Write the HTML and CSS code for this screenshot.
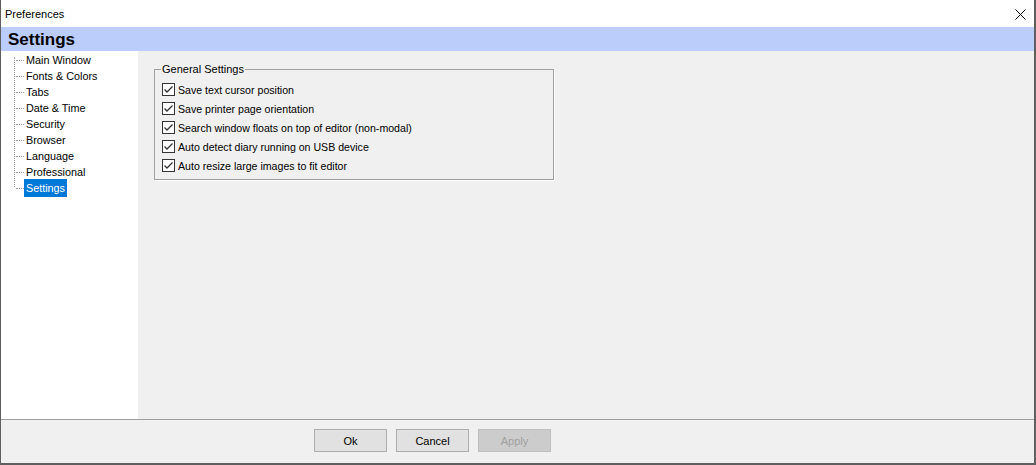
FILE: index.html
```html
<!DOCTYPE html>
<html lang="en">

<head>
    <meta charset="UTF-8">
    <title>Preferences</title>
    <link rel="stylesheet" href="styles.css">
</head>

<body>
    <div class="window">
        <div class="titlebar">
            <span class="title">Preferences</span>
            <span class="close">
                <svg width="11" height="11" viewBox="0 0 11 11">
                    <path d="M0.5 0.5 L10.5 10.5 M10.5 0.5 L0.5 10.5" stroke="#000" stroke-width="1" fill="none"/>
                </svg>
            </span>
        </div>

        <div class="banner">Settings</div>

        <div class="content">
            <nav class="sidebar">
                <ul class="tree">
                    <li><span class="node">Main Window</span></li>
                    <li><span class="node">Fonts &amp; Colors</span></li>
                    <li><span class="node">Tabs</span></li>
                    <li><span class="node">Date &amp; Time</span></li>
                    <li><span class="node">Security</span></li>
                    <li><span class="node">Browser</span></li>
                    <li><span class="node">Language</span></li>
                    <li><span class="node">Professional</span></li>
                    <li><span class="node selected">Settings</span></li>
                </ul>
            </nav>

            <main class="pane">
                <fieldset class="group">
                    <legend>General Settings</legend>
                    <div class="option"><span class="check"></span>Save text cursor position</div>
                    <div class="option"><span class="check"></span>Save printer page orientation</div>
                    <div class="option"><span class="check"></span>Search window floats on top of editor (non-modal)</div>
                    <div class="option"><span class="check"></span>Auto detect diary running on USB device</div>
                    <div class="option"><span class="check"></span>Auto resize large images to fit editor</div>
                </fieldset>
            </main>
        </div>

        <div class="footer">
            <button class="btn">Ok</button>
            <button class="btn">Cancel</button>
            <button class="btn" disabled>Apply</button>
        </div>
    </div>
</body>

</html>
```

FILE: styles.css
```css
body {
    margin: 0;
    font-family: "Liberation Sans", Arial, sans-serif;
    font-size: 11px;
    color: #000;
    background: #fff;
}

.window {
    width: 1036px;
    height: 465px;
    box-sizing: border-box;
    border-left: 1px solid #5f5f5f;
    border-right: 2px solid #5f5f5f;
    border-bottom: 2px solid #5f5f5f;
    display: flex;
    flex-direction: column;
    overflow: hidden;
}

.titlebar {
    height: 27px;
    display: flex;
    align-items: center;
    justify-content: space-between;
    background: #fff;
    padding: 0 8px 0 4px;
}

.title {
    font-size: 11px;
}

.close {
    display: flex;
    margin-top: 1px;
}

.banner {
    height: 24px;
    line-height: 25px;
    background: #bacdfb;
    padding-left: 7px;
    font-size: 17px;
    font-weight: bold;
}

.content {
    flex: 1;
    display: flex;
    min-height: 0;
}

.sidebar {
    width: 137px;
    background: #fff;
}

.tree {
    list-style: none;
    margin: 0;
    padding: 1px 0 0 23px;
    position: relative;
    font-size: 10.8px;
}

/* vertical dotted line of the tree */
.tree::before {
    content: "";
    position: absolute;
    left: 13px;
    top: 6px;
    height: 130px;
    border-left: 1px dotted #a0a0a0;
}

.tree li {
    position: relative;
    height: 16px;
}

.tree li::before {
    content: "";
    position: absolute;
    left: -8px;
    top: 8px;
    width: 8px;
    border-top: 1px dotted #a0a0a0;
}

.node {
    display: inline-block;
    line-height: 16px;
    padding: 0 2px;
}

.node.selected {
    background: #0078d7;
    color: #fff;
    padding: 1px 2px;
    margin-top: -1px;
}

.pane {
    flex: 1;
    background: #f0f0f0;
    padding: 12px 0 0 16px;
}

.group {
    box-sizing: border-box;
    width: 400px;
    margin: 0;
    padding: 0 6px 4px 6px;
    border: 1px solid #a0a0a0;
    box-shadow: 1px 1px 0 #fff;
}

.group legend {
    padding: 0 1px;
    line-height: 13px;
}

.option {
    display: flex;
    align-items: center;
    height: 19px;
    margin-left: 1px;
    font-size: 10.6px;
}

.option:first-of-type {
    margin-top: 4px;
}

.check {
    width: 13px;
    height: 13px;
    box-sizing: border-box;
    border: 1px solid #333;
    background: #fff url("data:image/svg+xml;utf8,<svg xmlns='http://www.w3.org/2000/svg' width='11' height='11' viewBox='0 0 11 11'><path d='M1.5 5.5 L4 8 L9.5 2.5' stroke='%23333' stroke-width='1.3' fill='none'/></svg>") center no-repeat;
    margin-right: 3px;
    margin-top: -1px;
}

.footer {
    height: 44px;
    box-sizing: border-box;
    border-top: 1px solid #a0a0a0;
    background: #f0f0f0;
    display: flex;
    align-items: flex-start;
    gap: 9px;
    padding: 9px 0 0 313px;
}

.btn {
    width: 73px;
    height: 23px;
    margin: 0;
    padding: 0;
    font-family: inherit;
    font-size: 11px;
    background: #e1e1e1;
    border: 1px solid #adadad;
    color: #000;
}

.btn:disabled {
    background: #cccccc;
    border-color: #bfbfbf;
    color: #a0a0a0;
}
```
